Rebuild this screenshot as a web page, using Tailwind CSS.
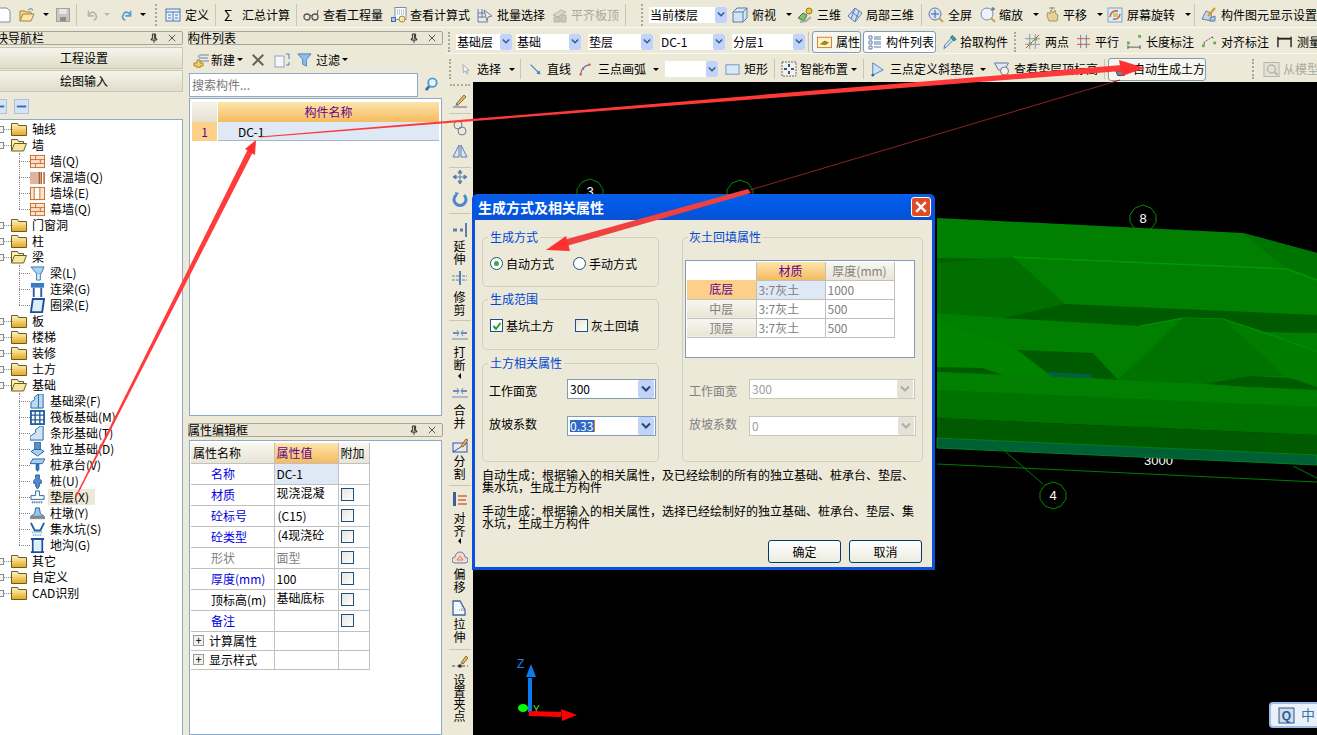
<!DOCTYPE html>
<html lang="zh">
<head>
<meta charset="utf-8">
<title>生成方式及相关属性</title>
<script src="https://cdn.jsdelivr.net/npm/@tailwindcss/browser@4"></script>
</head>
<body class="relative w-[1317px] h-[735px] overflow-hidden bg-[#ece9d8] text-black text-[12px] leading-[16px] whitespace-nowrap font-['Noto_Sans_CJK_SC','Liberation_Sans',sans-serif]">
<svg class="absolute w-0 h-0">
<defs>
<symbol id="page" viewBox="0 0 16 16"><path d="M2 1h9l3 3v11H2z" fill="#fff" stroke="#7f8ea8"/></symbol>
<symbol id="open" viewBox="0 0 16 16"><path d="M1 14V4h5l1 1h5v2" fill="#f6d98a" stroke="#a5803a"/><path d="M1 14l3-7h11l-3 7z" fill="#fbe7a8" stroke="#a5803a"/><path d="M9 3q3-3 5 0" fill="none" stroke="#3d7ac0"/></symbol>
<symbol id="save" viewBox="0 0 16 16"><rect x="1.500" y="1.500" width="13" height="13" fill="#c6c6c0" stroke="#a2a29b"/><rect x="4" y="2" width="8" height="5" fill="#e6e6e0"/><rect x="5" y="10" width="6" height="4" fill="#8f8f8a"/></symbol>
<symbol id="undo" viewBox="0 0 16 16"><path d="M4 3v6h6M4 8q5-6 8-1t-2 7" fill="none" stroke="currentColor" stroke-width="2"/></symbol>
<symbol id="redo" viewBox="0 0 16 16"><path d="M12 3v6H6M12 8Q7 2 4 7t2 7" fill="none" stroke="currentColor" stroke-width="2"/></symbol>
<symbol id="def" viewBox="0 0 16 16"><rect x="1" y="2" width="14" height="12" fill="#eaf1fb" stroke="#4a76ae"/><path d="M1 5h14M8 5v9M3 8h3M3 11h3M10 8h3M10 11h3" stroke="#4a76ae"/></symbol>
<symbol id="glass" viewBox="0 0 16 16"><circle cx="4" cy="10" r="3" fill="none" stroke="#555" stroke-width="1.300"/><circle cx="12" cy="10" r="3" fill="none" stroke="#555" stroke-width="1.300"/><path d="M7 9q1-1 2 0M14 8l1-5" fill="none" stroke="#555"/></symbol>
<symbol id="calc" viewBox="0 0 16 16"><rect x="4" y="0.500" width="11" height="12" fill="#fff" stroke="#7f8ea8"/><path d="M6 3h7M6 5h7M6 7h7" stroke="#7a92bd" stroke-dasharray="1 1"/><rect x="0.500" y="10.500" width="4" height="4" fill="#a8c3ec" stroke="#476ea8"/><circle cx="11" cy="12" r="3" fill="#fbe6a3" stroke="#9a8b55"/></symbol>
<symbol id="batch" viewBox="0 0 16 16"><path d="M1 2v13h10M1 6h9M1 10h7M5 2v9" fill="none" stroke="#5f7fb3"/><path d="M7 3l8 6-4 1-1 4z" fill="#e8eef8" stroke="#6d7f9b"/></symbol>
<symbol id="flat" viewBox="0 0 16 16"><path d="M1 8l8-5 5 2-8 5z" fill="#d9d8cf" stroke="#b6b5ab"/><path d="M2 10h6v5H2zM9 8h5v7H9z" fill="#c7c6bb" stroke="#b6b5ab"/></symbol>
<symbol id="cube" viewBox="0 0 16 16"><path d="M1 5l4-4h10v10l-4 4H1z" fill="#d3e4f5" stroke="#5a7ca5"/><path d="M1 5h10v10M11 5l4-4" fill="none" stroke="#5a7ca5"/></symbol>
<symbol id="three" viewBox="0 0 16 16"><path d="M1 11l5-5 4 2-3 6z" fill="#7fc06a" stroke="#497a3a"/><circle cx="12" cy="4" r="3" fill="#f2c53d" stroke="#a07a1a"/><path d="M3 15l6-1 5-4" fill="none" stroke="#aaa" stroke-width="2"/></symbol>
<symbol id="local" viewBox="0 0 16 16"><path d="M1 9l7-8 7 5-7 9z" fill="#cfe0f6" stroke="#5b7fb0"/><path d="M4.500 5l7 5M8 1.500L4 12M12 4l-4 10" stroke="#5b7fb0"/></symbol>
<symbol id="full" viewBox="0 0 16 16"><circle cx="7" cy="7" r="6" fill="#d7e3f5" stroke="#64799d"/><path d="M7 3v8M3 7h8" stroke="#3e5f96"/><path d="M11 11l4 4" stroke="#c9a24f" stroke-width="2"/></symbol>
<symbol id="zoom" viewBox="0 0 16 16"><circle cx="7" cy="7" r="6" fill="#eef3fb" stroke="#7f8ea8"/><path d="M11 11l4 4" stroke="#c9a24f" stroke-width="2"/><path d="M11 2h4M13 0v4" stroke="#3e5f96"/></symbol>
<symbol id="hand" viewBox="0 0 16 16"><path d="M3 9l1-4 2 2 1-4 2 3 2-3 1 4 2 1-1 6H5z" fill="#e8cf9b" stroke="#a89466"/><path d="M8 0v3M5 1h6" stroke="#8c8c80"/></symbol>
<symbol id="rot" viewBox="0 0 16 16"><rect x="1" y="1" width="14" height="14" fill="#d9ecf8" stroke="#77a8cc"/><path d="M3 10q1-7 8-6M13 7q-1 6-7 5" fill="none" stroke="#e05a3c" stroke-width="1.500"/><rect x="6" y="6" width="5" height="4" fill="#b7d67a"/></symbol>
<symbol id="gear" viewBox="0 0 16 16"><path d="M1 12l4-8 5 2 1 8z" fill="#c9d7ea" stroke="#6b7f9c"/><path d="M7 9l7-8" stroke="#d79a2b" stroke-width="2"/><path d="M9 11l5-2v5H9z" fill="#a9c6ea" stroke="#5f7ca5"/></symbol>
<symbol id="attr" viewBox="0 0 16 16"><rect x="0.500" y="3.500" width="15" height="11" fill="#fff3cf" stroke="#d47d2a"/><path d="M3 11l5-4 5 2-4 3z" fill="#9c8a1f"/></symbol>
<symbol id="list" viewBox="0 0 16 16"><path d="M2 2h3v3H2zM2 7h3v3H2zM2 12h3v3H2z" fill="#fff" stroke="#5a7ca5"/><path d="M7 3h7M7 5h7M7 8h7M7 10h7M7 13h7" stroke="#5a7ca5"/></symbol>
<symbol id="pick" viewBox="0 0 16 16"><path d="M2 15l1-4 7-7 2 2-7 7z" fill="#cfe5f5" stroke="#4a7ba6"/><path d="M9 3l2-2 4 4-2 2z" fill="#39a0b0" stroke="#2a6f80"/></symbol>
<symbol id="two" viewBox="0 0 16 16"><path d="M0 5h16M0 11h16M5 0v16M11 0v16" stroke="#8a94b4"/><path d="M1 15L15 1" stroke="#dd3b2c"/><rect x="4" y="9" width="3" height="3" fill="#66b04c"/><rect x="10" y="4" width="3" height="3" fill="#66b04c"/></symbol>
<symbol id="para" viewBox="0 0 16 16"><path d="M1 5h14M1 11h14" stroke="#d8534a"/><path d="M5 1v14M11 1v14" stroke="#6077ae"/></symbol>
<symbol id="leng" viewBox="0 0 16 16"><rect x="0" y="8" width="3" height="3" fill="#66b04c"/><rect x="12" y="1" width="3" height="3" fill="#66b04c"/><path d="M1 14h13M1 12v4M14 12v4" stroke="#555"/></symbol>
<symbol id="alig" viewBox="0 0 16 16"><rect x="0" y="11" width="3" height="3" fill="#66b04c"/><rect x="12" y="8" width="3" height="3" fill="#66b04c"/><path d="M2 9l9-6M2 9l1 2M11 3l1 2" stroke="#555" stroke-dasharray="2 1"/></symbol>
<symbol id="meas" viewBox="0 0 16 16"><path d="M1 3v11M15 3v11" stroke="#222" stroke-width="1.500"/><path d="M1 5h14" stroke="#222" stroke-width="2"/></symbol>
<symbol id="cursor" viewBox="0 0 16 16"><path d="M3 1l10 9-4 .5 2 4.500-2 .5-2-4.500-3 3z" fill="#eef2fa" stroke="#7d8aa6"/></symbol>
<symbol id="line" viewBox="0 0 16 16"><path d="M2 2l11 11" stroke="#4d7fbf" stroke-width="1.500"/><path d="M14 14l-5-1 4-4z" fill="#4d7fbf"/></symbol>
<symbol id="arc" viewBox="0 0 16 16"><path d="M2 14Q3 4 13 2" fill="none" stroke="#4d7fbf" stroke-width="1.500"/><circle cx="2" cy="14" r="1.500" fill="#dd5a44"/><circle cx="13" cy="2" r="1.500" fill="#dd5a44"/><circle cx="5" cy="7" r="1.500" fill="#dd5a44"/></symbol>
<symbol id="rect" viewBox="0 0 16 16"><rect x="1" y="3" width="14" height="10" fill="#dce8fa" stroke="#6c8fc4"/></symbol>
<symbol id="smart" viewBox="0 0 16 16"><rect x="1" y="1" width="14" height="14" fill="#f3f2ea" stroke="#666" stroke-dasharray="2 1"/><path d="M8 3v3M8 10v3M3 8h3M10 8h3" stroke="#39577f" stroke-width="2"/></symbol>
<symbol id="tri" viewBox="0 0 16 16"><path d="M2 1v14l12-6z" fill="#cfe1f8" stroke="#3f78c0"/><circle cx="2" cy="15" r="1.500" fill="#2d62a8"/></symbol>
<symbol id="vtop" viewBox="0 0 16 16"><path d="M1 2h14l-4 7H5z" fill="#dfe9f6" stroke="#5a7ca5"/><circle cx="11" cy="10" r="4" fill="#f3f3ee" stroke="#777"/><path d="M13 13l3 3" stroke="#c9a24f" stroke-width="2"/></symbol>
<symbol id="auto" viewBox="0 0 16 16"><path d="M2 10h11l-2 5H4z" fill="#7b7f92" stroke="#444"/><path d="M2 6l3 3 8-8" fill="none" stroke="#37a02f" stroke-width="2.500"/></symbol>
<symbol id="model" viewBox="0 0 16 16"><rect x="0.500" y="1.500" width="15" height="14" fill="#e4e2d6" stroke="#b7b5a8"/><circle cx="8" cy="8" r="4" fill="none" stroke="#b7b5a8" stroke-width="1.500"/><path d="M11 11l3 3" stroke="#b7b5a8" stroke-width="2"/></symbol>
<symbol id="fold" viewBox="0 0 16 16"><path d="M0.500 2.500h6l1 2h8v10H.5z" fill="url(#fg)" stroke="#6e5a1f"/></symbol>
<symbol id="foldo" viewBox="0 0 16 16"><path d="M.5 14V2.500h6l1 2h5v2" fill="#f8eeb8" stroke="#6e5a1f"/><path d="M.5 14l3-7.500h12l-3 7.500z" fill="#f9e79d" stroke="#6e5a1f"/></symbol>
<linearGradient id="fg" x1="0" y1="0" x2="0" y2="1"><stop offset="0" stop-color="#fff6c8"/><stop offset="1" stop-color="#e2a818"/></linearGradient>
<symbol id="brick" viewBox="0 0 16 16"><rect x="0.500" y="1.500" width="15" height="13" fill="#fbe3cf" stroke="#c86a2a"/><path d="M1 6h14M1 10h14M6 2v4M11 6v4M6 10v4" stroke="#c86a2a"/></symbol>
<symbol id="brick2" viewBox="0 0 16 16"><rect x="0" y="2" width="10" height="13" fill="#dcb6a0"/><path d="M10 2v13M12 2v13M15 2v13" stroke="#b0562a" stroke-width="1.500"/></symbol>
<symbol id="pier" viewBox="0 0 16 16"><rect x="0.500" y="1.500" width="15" height="13" fill="#fbe3cf" stroke="#c86a2a"/><rect x="4.500" y="1.500" width="6" height="13" fill="#fff" stroke="#c86a2a"/></symbol>
<symbol id="beam" viewBox="0 0 16 16"><path d="M1 1h14l-3 7H7z" fill="#a9d3f2" stroke="#3275b8"/><path d="M7 8v7h4V8" fill="#dbeefa" stroke="#3275b8"/></symbol>
<symbol id="cbeam" viewBox="0 0 16 16"><rect x="1" y="1" width="14" height="5" fill="#3a7cc4"/><path d="M4 6v10M12 6v10" stroke="#2c5ea0" stroke-width="2"/></symbol>
<symbol id="ring" viewBox="0 0 16 16"><path d="M3 1h12l-2 14H1z" fill="#dbeefa" stroke="#1d4f99" stroke-width="2"/></symbol>
<symbol id="fbeam" viewBox="0 0 16 16"><path d="M1 15V9l4-3V3l4-3h5v15z" fill="#b9daf4" stroke="#25609f"/><path d="M9 0v15" stroke="#25609f"/></symbol>
<symbol id="raft" viewBox="0 0 16 16"><rect x="1" y="1" width="14" height="14" fill="#fff" stroke="#25609f" stroke-width="2"/><path d="M5.500 1v14M10.500 1v14M1 5.500h14M1 10.500h14" stroke="#25609f" stroke-width="1.500"/></symbol>
<symbol id="strip" viewBox="0 0 16 16"><path d="M0 15v-4l6-4V4l5-4h3v15z" fill="#cde4f7" stroke="#25609f"/></symbol>
<symbol id="ind" viewBox="0 0 16 16"><path d="M1 10l7-4 7 4-7 5z" fill="#a9cfef" stroke="#25609f"/><rect x="5" y="0" width="6" height="8" fill="#5c93cc" stroke="#25609f"/></symbol>
<symbol id="cap" viewBox="0 0 16 16"><path d="M3 1h13l-3 5H0z" fill="#a9cfef" stroke="#25609f"/><path d="M6 6h4v6l-2 3-2-3z" fill="#2f6fb5"/></symbol>
<symbol id="pile" viewBox="0 0 16 16"><path d="M6 1h4v4l2 2v3h-2v3l-2 3-2-3v-3H4V7l2-2z" fill="#4f8ccb" stroke="#25609f"/></symbol>
<symbol id="pad" viewBox="0 0 16 16"><path d="M6 1h4v5h5v4H1V6h5z" fill="#fff" stroke="#25609f"/><path d="M2 13h12" stroke="#25609f" stroke-dasharray="1 1" stroke-width="2"/></symbol>
<symbol id="cush" viewBox="0 0 16 16"><path d="M1 11l4-3 1-6h4l1 6 4 3z" fill="#9ec6ea" stroke="#25609f"/><rect x="0" y="11" width="16" height="3" fill="#8d8d85"/></symbol>
<symbol id="sump" viewBox="0 0 16 16"><path d="M1 1l4 8h6l4-8" fill="none" stroke="#25609f" stroke-width="2"/><path d="M2 11h12M3 14h10" stroke="#6ba3d6" stroke-dasharray="1 1" stroke-width="2"/></symbol>
<symbol id="trench" viewBox="0 0 16 16"><path d="M1 15h14M1 1h14M3 2v12M13 2v12" stroke="#1d4f99" stroke-width="2"/><rect x="4" y="3" width="8" height="10" fill="#dbeefa"/></symbol>
<symbol id="brush" viewBox="0 0 16 16"><path d="M1 14h14" stroke="#667"/><path d="M4 11l8-9 2 2-8 8z" fill="#e8b75e" stroke="#8a6a33"/><path d="M3 13l2-3 2 2z" fill="#6c6fc0"/></symbol>
<symbol id="circ" viewBox="0 0 16 16"><circle cx="6" cy="5" r="4" fill="none" stroke="#6d7c9a"/><circle cx="10" cy="11" r="4" fill="none" stroke="#6d7c9a"/></symbol>
<symbol id="mirror" viewBox="0 0 16 16"><path d="M7 2v12H1zM9 2v12h6z" fill="#dce8f6" stroke="#5c7eaf"/></symbol>
<symbol id="move" viewBox="0 0 16 16"><path d="M8 1v14M1 8h14M8 1L6 4h4zM8 15l-2-3h4zM1 8l3-2v4zM15 8l-3-2v4z" fill="#5d7fae" stroke="#5d7fae"/></symbol>
<symbol id="rotb" viewBox="0 0 16 16"><path d="M12 4a6 6 0 1 1-8 0" fill="none" stroke="#4d87cf" stroke-width="3"/><path d="M3 1l4 1-3 4z" fill="#4d87cf"/></symbol>
<symbol id="ext" viewBox="0 0 16 16"><rect x="13" y="1" width="2" height="14" fill="#5d7fae"/><path d="M1 8h5M8 8h3" stroke="#5d7fae" stroke-width="3" stroke-dasharray="4 1"/></symbol>
<symbol id="trim" viewBox="0 0 16 16"><rect x="7" y="1" width="2" height="14" fill="#5d7fae"/><path d="M0 6h7M0 10h7M10 6h5M10 10h5" stroke="#5d7fae" stroke-dasharray="3 1"/></symbol>
<symbol id="brk" viewBox="0 0 16 16"><path d="M1 6h6M9 6h6" stroke="#6d8cb9" stroke-width="2"/><path d="M0 12h16" stroke="#6d8cb9"/><path d="M5 3l2 3-2 3M11 3L9 6l2 3" fill="none" stroke="#6d8cb9"/></symbol>
<symbol id="seg" viewBox="0 0 16 16"><rect x="1" y="6" width="14" height="9" fill="none" stroke="#2d50c8"/><path d="M1 15L15 6" stroke="#2d50c8"/><path d="M9 9l5-7 2 1-5 7z" fill="#e8b75e" stroke="#8a6a33"/></symbol>
<symbol id="alg" viewBox="0 0 16 16"><rect x="1" y="1" width="3" height="14" fill="#3d5f94"/><path d="M6 5h9M6 9h8M6 13h9" stroke="#cc6a44" stroke-width="1.500"/></symbol>
<symbol id="off" viewBox="0 0 16 16"><path d="M3 13a3 3 0 0 1 0-6q1-5 5-5t5 5a3 3 0 0 1 0 6z" fill="#f7d9d2" stroke="#5b7fb0"/><path d="M5 10l3-4 3 4z" fill="none" stroke="#d9785f"/></symbol>
<symbol id="str" viewBox="0 0 16 16"><path d="M1 15V1h7l5 9v5z" fill="#f4f7fc" stroke="#3f66a3" stroke-width="1.300"/><path d="M10 6v6M7 10h6" stroke="#888" stroke-dasharray="1 1"/></symbol>
<symbol id="setp" viewBox="0 0 16 16"><path d="M0 11h16" stroke="#444" stroke-dasharray="3 2"/><rect x="6.500" y="9.500" width="3" height="3" fill="#222"/><path d="M9 8l5-7 2 2-5 6z" fill="#e8b75e" stroke="#8a6a33"/></symbol>
<symbol id="chev" viewBox="0 0 10 8"><path d="M1 1.500l4 4 4-4" fill="none" stroke="currentColor" stroke-width="2"/></symbol>
<symbol id="pin" viewBox="0 0 10 12"><path d="M3 1h4v6h1.500v1.500h-7V7H3zM5 8.500V12M5.500 1.500V7" fill="none" stroke="#000"/></symbol>
<symbol id="xx" viewBox="0 0 10 10"><path d="M1 1l8 8M9 1l-8 8" stroke="#333"/></symbol>
<symbol id="mag" viewBox="0 0 16 16"><circle cx="9" cy="6" r="4.500" fill="#eaf4ff" stroke="#4b9bdc" stroke-width="2"/><path d="M5.500 10L2 14" stroke="#4b6fa0" stroke-width="3"/></symbol>
<symbol id="newi" viewBox="0 0 16 16"><path d="M7 3h9M7 6h8M7 9h9" stroke="#6f85ab"/><path d="M1 11h3V8h3v3h3v3H7v2H4v-2H1z" fill="#f2cf6c" stroke="#a88526"/><path d="M4 4L7 2v6z" fill="#a6bcdc"/></symbol>
<symbol id="del" viewBox="0 0 16 16"><path d="M2 2l12 12M14 2L2 14" stroke="#66665f" stroke-width="2.400"/></symbol>
<symbol id="copy" viewBox="0 0 16 16"><rect x="1" y="4" width="9" height="11" fill="#f4f6fb" stroke="#93a3bd"/><path d="M12 2h3v5M15 10v3h-3" fill="none" stroke="#4a7ec0"/></symbol>
<symbol id="filt" viewBox="0 0 16 16"><path d="M1 2h14L10 8v7l-4-2V8z" fill="#8cc0ea" stroke="#4a7ec0"/></symbol>
<symbol id="min" viewBox="0 0 16 16"><rect x="0.500" y="0.500" width="15" height="15" fill="#d6e3f5" stroke="#a9bedc"/><path d="M3 8h10" stroke="#2f6ab3" stroke-width="2"/></symbol>
</defs>
</svg>

<!-- top toolbar -->
<div class="flex items-center h-[28px] pt-[2px] border-b border-[#f8f7f0] overflow-hidden">
  <svg class="ml-[-4px] w-[16px] h-[16px] mr-[6px] shrink-0"><use href="#page"/></svg>
  <svg class="w-[18px] h-[16px] mr-[7px] shrink-0"><use href="#open"/></svg>
  <i class="w-[12px] shrink-0"><b class="block w-0 h-0 border-x-[3px] border-t-[3px] border-x-transparent border-t-black"></b></i>
  <svg class="w-[16px] h-[16px] mr-[5px] shrink-0"><use href="#save"/></svg>
  <i class="w-[9px] h-[22px] border-l border-[#c9c6b6] shrink-0"></i>
  <svg class="w-[14px] h-[16px] mr-[5px] text-[#b8b8b2] shrink-0"><use href="#undo"/></svg>
  <i class="w-[16px] shrink-0"><b class="block w-0 h-0 border-x-[3px] border-t-[3px] border-x-transparent border-t-[#b8b8b2]"></b></i>
  <svg class="w-[14px] h-[16px] mr-[6px] text-[#5f9ad8] shrink-0"><use href="#redo"/></svg>
  <i class="w-[15px] shrink-0"><b class="block w-0 h-0 border-x-[3px] border-t-[3px] border-x-transparent border-t-black"></b></i>
  <i class="w-[10px] h-[22px] border-l-2 border-dotted border-[#aaa89a] shrink-0"></i>
  <div class="w-[50px] shrink-0 flex items-center gap-[4px]"><svg class="w-[16px] h-[16px]"><use href="#def"/></svg><span>定义</span></div>
  <i class="w-[9px] h-[22px] border-l border-[#c9c6b6] shrink-0"></i>
  <div class="w-[72px] shrink-0 flex items-center"><span class="w-[18px] text-[14px]">Σ</span><span>汇总计算</span></div>
  <i class="w-[7px] h-[22px] border-l border-[#c9c6b6] shrink-0"></i>
  <div class="w-[88px] shrink-0 flex items-center gap-[4px]"><svg class="w-[16px] h-[16px]"><use href="#glass"/></svg><span>查看工程量</span></div>
  <div class="w-[86px] shrink-0 flex items-center gap-[3px]"><svg class="w-[16px] h-[16px]"><use href="#calc"/></svg><span>查看计算式</span></div>
  <div class="w-[75px] shrink-0 flex items-center gap-[4px]"><svg class="w-[16px] h-[16px]"><use href="#batch"/></svg><span>批量选择</span></div>
  <div class="w-[73px] shrink-0 flex items-center gap-[3px] text-[#a9a89e]"><svg class="w-[16px] h-[16px]"><use href="#flat"/></svg><span>平齐板顶</span></div>
  <i class="w-[16px] h-[22px] border-l border-[#c9c6b6] shrink-0"></i>
  <i class="w-[8px] h-[22px] border-l-2 border-dotted border-[#aaa89a] shrink-0"></i>
  <div class="w-[78px] h-[16px] shrink-0 bg-white flex items-center justify-between pl-[1px]"><span>当前楼层</span><span class="w-[12px] h-[16px] bg-[#c1d2fb] rounded-[2px] flex items-center justify-center text-[#3a5a90]"><svg class="w-[8px] h-[7px]"><use href="#chev"/></svg></span></div>
  <div class="ml-[5px] w-[65px] shrink-0 flex items-center gap-[4px]"><svg class="w-[16px] h-[16px]"><use href="#cube"/></svg><span>俯视</span><b class="ml-[6px] block w-0 h-0 border-x-[3px] border-t-[3px] border-x-transparent border-t-black"></b></div>
  <div class="w-[50px] shrink-0 flex items-center gap-[4px]"><svg class="w-[16px] h-[16px]"><use href="#three"/></svg><span>三维</span></div>
  <div class="w-[74px] shrink-0 flex items-center gap-[3px]"><svg class="w-[16px] h-[16px]"><use href="#local"/></svg><span>局部三维</span></div>
  <i class="w-[7px] h-[22px] border-l border-[#c9c6b6] shrink-0"></i>
  <div class="w-[52px] shrink-0 flex items-center gap-[4px]"><svg class="w-[16px] h-[16px]"><use href="#full"/></svg><span>全屏</span></div>
  <div class="w-[64px] shrink-0 flex items-center gap-[3px]"><svg class="w-[16px] h-[16px]"><use href="#zoom"/></svg><span>缩放</span><b class="ml-[7px] block w-0 h-0 border-x-[3px] border-t-[3px] border-x-transparent border-t-black"></b></div>
  <div class="w-[63px] shrink-0 flex items-center gap-[3px]"><svg class="w-[16px] h-[16px]"><use href="#hand"/></svg><span>平移</span><b class="ml-[7px] block w-0 h-0 border-x-[3px] border-t-[3px] border-x-transparent border-t-black"></b></div>
  <div class="w-[87px] shrink-0 flex items-center gap-[4px]"><svg class="w-[16px] h-[16px]"><use href="#rot"/></svg><span>屏幕旋转</span><b class="ml-[6px] block w-0 h-0 border-x-[3px] border-t-[3px] border-x-transparent border-t-black"></b></div>
  <i class="w-[7px] h-[22px] border-l border-[#c9c6b6] shrink-0"></i>
  <div class="shrink-0 flex items-center gap-[4px]"><svg class="w-[16px] h-[16px]"><use href="#gear"/></svg><span>构件图元显示设置</span></div>
</div>

<div class="flex h-[707px]">
  <!-- left navigation -->
  <div class="ml-[-15px] w-[198px] shrink-0 pt-[3px] flex flex-col">
    <div class="h-[14px] flex items-center justify-between bg-[#e9e6d6] border border-[#a8a597] rounded-[2px] pl-[10px] pr-[6px]"><span>快导航栏</span><span class="flex items-center gap-[10px]"><svg class="w-[8px] h-[10px]"><use href="#pin"/></svg><svg class="w-[8px] h-[8px]"><use href="#xx"/></svg></span></div>
    <div class="mt-[2px] h-[22px] flex items-center justify-center bg-gradient-to-b from-[#f6f4ea] to-[#e0ddcb] border border-[#c9c6b6]">工程设置</div>
    <div class="mt-px h-[22px] flex items-center justify-center bg-gradient-to-b from-[#f6f4ea] to-[#e0ddcb] border border-[#c9c6b6]">绘图输入</div>
    <div class="mt-[2px] h-[25px] flex items-center pl-[7px] gap-[7px]"><svg class="w-[15px] h-[15px]"><use href="#min"/></svg><svg class="w-[15px] h-[15px]"><use href="#min"/></svg></div>
    <div class="flex-1 bg-white border-r border-t border-[#8faac8] pt-px pl-[12px] overflow-hidden">
      <div class="h-4 flex items-center"><i class="w-[7px] h-[7px] border border-[#8a8a8a] shrink-0 bg-[#f4f4f0]"></i><i class="w-[7px] border-t border-dotted border-[#888]"></i><svg class="w-[16px] h-[16px] shrink-0"><use href="#fold"/></svg><span class="ml-[5px]">轴线</span></div>
      <div class="h-4 flex items-center"><i class="w-[7px] h-[7px] border border-[#8a8a8a] shrink-0 bg-[#f4f4f0]"></i><i class="w-[7px] border-t border-dotted border-[#888]"></i><svg class="w-[16px] h-[16px] shrink-0"><use href="#foldo"/></svg><span class="ml-[5px]">墙</span></div>
      <div class="relative">
        <i class="absolute left-[22px] top-0 bottom-[8px] border-l border-dotted border-[#888]"></i>
        <div class="h-4 flex items-center pl-[22px]"><i class="w-[11px] border-t border-dotted border-[#888]"></i><svg class="w-[15px] h-[15px] shrink-0"><use href="#brick"/></svg><span class="ml-[5px]">墙(Q)</span></div>
        <div class="h-4 flex items-center pl-[22px]"><i class="w-[11px] border-t border-dotted border-[#888]"></i><svg class="w-[15px] h-[15px] shrink-0"><use href="#brick2"/></svg><span class="ml-[5px]">保温墙(Q)</span></div>
        <div class="h-4 flex items-center pl-[22px]"><i class="w-[11px] border-t border-dotted border-[#888]"></i><svg class="w-[15px] h-[15px] shrink-0"><use href="#pier"/></svg><span class="ml-[5px]">墙垛(E)</span></div>
        <div class="h-4 flex items-center pl-[22px]"><i class="w-[11px] border-t border-dotted border-[#888]"></i><svg class="w-[15px] h-[15px] shrink-0"><use href="#brick"/></svg><span class="ml-[5px]">幕墙(Q)</span></div>
      </div>
      <div class="h-4 flex items-center"><i class="w-[7px] h-[7px] border border-[#8a8a8a] shrink-0 bg-[#f4f4f0]"></i><i class="w-[7px] border-t border-dotted border-[#888]"></i><svg class="w-[16px] h-[16px] shrink-0"><use href="#fold"/></svg><span class="ml-[5px]">门窗洞</span></div>
      <div class="h-4 flex items-center"><i class="w-[7px] h-[7px] border border-[#8a8a8a] shrink-0 bg-[#f4f4f0]"></i><i class="w-[7px] border-t border-dotted border-[#888]"></i><svg class="w-[16px] h-[16px] shrink-0"><use href="#fold"/></svg><span class="ml-[5px]">柱</span></div>
      <div class="h-4 flex items-center"><i class="w-[7px] h-[7px] border border-[#8a8a8a] shrink-0 bg-[#f4f4f0]"></i><i class="w-[7px] border-t border-dotted border-[#888]"></i><svg class="w-[16px] h-[16px] shrink-0"><use href="#foldo"/></svg><span class="ml-[5px]">梁</span></div>
      <div class="relative">
        <i class="absolute left-[22px] top-0 bottom-[8px] border-l border-dotted border-[#888]"></i>
        <div class="h-4 flex items-center pl-[22px]"><i class="w-[11px] border-t border-dotted border-[#888]"></i><svg class="w-[15px] h-[15px] shrink-0"><use href="#beam"/></svg><span class="ml-[5px]">梁(L)</span></div>
        <div class="h-4 flex items-center pl-[22px]"><i class="w-[11px] border-t border-dotted border-[#888]"></i><svg class="w-[15px] h-[15px] shrink-0"><use href="#cbeam"/></svg><span class="ml-[5px]">连梁(G)</span></div>
        <div class="h-4 flex items-center pl-[22px]"><i class="w-[11px] border-t border-dotted border-[#888]"></i><svg class="w-[15px] h-[15px] shrink-0"><use href="#ring"/></svg><span class="ml-[5px]">圈梁(E)</span></div>
      </div>
      <div class="h-4 flex items-center"><i class="w-[7px] h-[7px] border border-[#8a8a8a] shrink-0 bg-[#f4f4f0]"></i><i class="w-[7px] border-t border-dotted border-[#888]"></i><svg class="w-[16px] h-[16px] shrink-0"><use href="#fold"/></svg><span class="ml-[5px]">板</span></div>
      <div class="h-4 flex items-center"><i class="w-[7px] h-[7px] border border-[#8a8a8a] shrink-0 bg-[#f4f4f0]"></i><i class="w-[7px] border-t border-dotted border-[#888]"></i><svg class="w-[16px] h-[16px] shrink-0"><use href="#fold"/></svg><span class="ml-[5px]">楼梯</span></div>
      <div class="h-4 flex items-center"><i class="w-[7px] h-[7px] border border-[#8a8a8a] shrink-0 bg-[#f4f4f0]"></i><i class="w-[7px] border-t border-dotted border-[#888]"></i><svg class="w-[16px] h-[16px] shrink-0"><use href="#fold"/></svg><span class="ml-[5px]">装修</span></div>
      <div class="h-4 flex items-center"><i class="w-[7px] h-[7px] border border-[#8a8a8a] shrink-0 bg-[#f4f4f0]"></i><i class="w-[7px] border-t border-dotted border-[#888]"></i><svg class="w-[16px] h-[16px] shrink-0"><use href="#fold"/></svg><span class="ml-[5px]">土方</span></div>
      <div class="h-4 flex items-center"><i class="w-[7px] h-[7px] border border-[#8a8a8a] shrink-0 bg-[#f4f4f0]"></i><i class="w-[7px] border-t border-dotted border-[#888]"></i><svg class="w-[16px] h-[16px] shrink-0"><use href="#foldo"/></svg><span class="ml-[5px]">基础</span></div>
      <div class="relative">
        <i class="absolute left-[22px] top-0 bottom-[8px] border-l border-dotted border-[#888]"></i>
        <div class="h-4 flex items-center pl-[22px]"><i class="w-[11px] border-t border-dotted border-[#888]"></i><svg class="w-[15px] h-[15px] shrink-0"><use href="#fbeam"/></svg><span class="ml-[5px]">基础梁(F)</span></div>
        <div class="h-4 flex items-center pl-[22px]"><i class="w-[11px] border-t border-dotted border-[#888]"></i><svg class="w-[15px] h-[15px] shrink-0"><use href="#raft"/></svg><span class="ml-[5px]">筏板基础(M)</span></div>
        <div class="h-4 flex items-center pl-[22px]"><i class="w-[11px] border-t border-dotted border-[#888]"></i><svg class="w-[15px] h-[15px] shrink-0"><use href="#strip"/></svg><span class="ml-[5px]">条形基础(T)</span></div>
        <div class="h-4 flex items-center pl-[22px]"><i class="w-[11px] border-t border-dotted border-[#888]"></i><svg class="w-[15px] h-[15px] shrink-0"><use href="#ind"/></svg><span class="ml-[5px]">独立基础(D)</span></div>
        <div class="h-4 flex items-center pl-[22px]"><i class="w-[11px] border-t border-dotted border-[#888]"></i><svg class="w-[15px] h-[15px] shrink-0"><use href="#cap"/></svg><span class="ml-[5px]">桩承台(V)</span></div>
        <div class="h-4 flex items-center pl-[22px]"><i class="w-[11px] border-t border-dotted border-[#888]"></i><svg class="w-[15px] h-[15px] shrink-0"><use href="#pile"/></svg><span class="ml-[5px]">桩(U)</span></div>
        <div class="h-4 flex items-center pl-[22px]"><i class="w-[11px] border-t border-dotted border-[#888]"></i><svg class="w-[15px] h-[15px] shrink-0"><use href="#pad"/></svg><span class="ml-[3px] pl-[2px] pr-[6px] bg-[#ece9d8]">垫层(X)</span></div>
        <div class="h-4 flex items-center pl-[22px]"><i class="w-[11px] border-t border-dotted border-[#888]"></i><svg class="w-[15px] h-[15px] shrink-0"><use href="#cush"/></svg><span class="ml-[5px]">柱墩(Y)</span></div>
        <div class="h-4 flex items-center pl-[22px]"><i class="w-[11px] border-t border-dotted border-[#888]"></i><svg class="w-[15px] h-[15px] shrink-0"><use href="#sump"/></svg><span class="ml-[5px]">集水坑(S)</span></div>
        <div class="h-4 flex items-center pl-[22px]"><i class="w-[11px] border-t border-dotted border-[#888]"></i><svg class="w-[15px] h-[15px] shrink-0"><use href="#trench"/></svg><span class="ml-[5px]">地沟(G)</span></div>
      </div>
      <div class="h-4 flex items-center"><i class="w-[7px] h-[7px] border border-[#8a8a8a] shrink-0 bg-[#f4f4f0]"></i><i class="w-[7px] border-t border-dotted border-[#888]"></i><svg class="w-[16px] h-[16px] shrink-0"><use href="#fold"/></svg><span class="ml-[5px]">其它</span></div>
      <div class="h-4 flex items-center"><i class="w-[7px] h-[7px] border border-[#8a8a8a] shrink-0 bg-[#f4f4f0]"></i><i class="w-[7px] border-t border-dotted border-[#888]"></i><svg class="w-[16px] h-[16px] shrink-0"><use href="#fold"/></svg><span class="ml-[5px]">自定义</span></div>
      <div class="h-4 flex items-center"><i class="w-[7px] h-[7px] border border-[#8a8a8a] shrink-0 bg-[#f4f4f0]"></i><i class="w-[7px] border-t border-dotted border-[#888]"></i><svg class="w-[16px] h-[16px] shrink-0"><use href="#fold"/></svg><span class="ml-[5px]">CAD识别</span></div>
    </div>
  </div>

  <!-- component list + properties -->
  <div class="ml-[5px] w-[255px] shrink-0 pt-[3px] flex flex-col">
    <div class="h-[14px] flex items-center justify-between bg-[#e9e6d6] border border-[#a8a597] rounded-[2px] pr-[6px]"><span class="-ml-px">构件列表</span><span class="flex items-center gap-[10px]"><svg class="w-[8px] h-[10px]"><use href="#pin"/></svg><svg class="w-[8px] h-[8px]"><use href="#xx"/></svg></span></div>
    <div class="mt-[2px] h-[25px] flex items-center pl-[5px]">
      <svg class="w-[16px] h-[16px]"><use href="#newi"/></svg><span class="ml-[2px]">新建</span><b class="ml-[2px] block w-0 h-0 border-x-[3px] border-t-[3px] border-x-transparent border-t-black"></b>
      <svg class="ml-[8px] w-[14px] h-[14px]"><use href="#del"/></svg>
      <svg class="ml-[9px] w-[16px] h-[16px]"><use href="#copy"/></svg>
      <svg class="ml-[7px] w-[15px] h-[15px]"><use href="#filt"/></svg><span class="ml-[4px]">过滤</span><b class="ml-[2px] block w-0 h-0 border-x-[3px] border-t-[3px] border-x-transparent border-t-black"></b>
    </div>
    <div class="h-[25px] flex items-center">
      <div class="ml-px w-[229px] h-[24px] bg-white border border-[#8faac8] pl-[2px] flex items-center text-[#777]">搜索构件...</div>
      <svg class="ml-[6px] w-[15px] h-[15px]"><use href="#mag"/></svg>
    </div>
    <div class="mx-px mt-px h-[318px] bg-white border border-[#8faac8] p-px">
      <div class="flex h-[20px] pt-0 mt-[2px]">
        <div class="ml-px w-[25px] bg-gradient-to-b from-[#f5f3e9] to-[#e4e1d2]"></div>
        <div class="ml-px flex-1 mr-px flex items-center justify-center bg-gradient-to-b from-[#fde4ab] to-[#f5bb5e] text-[#62048c]">构件名称</div>
      </div>
      <div class="flex h-[19px]">
        <div class="ml-px w-[25px] flex items-center justify-center bg-[#fdd08a] text-[#62048c]">1</div>
        <div class="ml-px flex-1 mr-px flex items-center pl-[20px] pt-[2px] bg-[#dfe9f5] border-b border-[#a9b8c8]">DC-1</div>
      </div>
    </div>
    <div class="mt-[7px] h-[14px] flex items-center justify-between bg-[#e9e6d6] border border-[#a8a597] rounded-[2px] pr-[6px]"><span class="-ml-px">属性编辑框</span><span class="flex items-center gap-[10px]"><svg class="w-[8px] h-[10px]"><use href="#pin"/></svg><svg class="w-[8px] h-[8px]"><use href="#xx"/></svg></span></div>
    <div class="mx-px mt-[3px] flex-1 bg-white border border-[#8faac8] pl-px pt-px">
      <table class="table-fixed w-[178px] mt-px">
        <colgroup><col class="w-[83px]"><col class="w-[64px]"><col class="w-[31px]"></colgroup>
        <tr class="h-[20px]"><td class="bg-gradient-to-b from-[#f8f7f0] to-[#e8e5d6] pl-[2px] border-b border-[#c0c0c0]">属性名称</td><td class="bg-gradient-to-b from-[#fde4ab] to-[#f5bb5e] text-[#62048c] pl-[2px] border-l border-b border-[#c0c0c0]">属性值</td><td class="bg-gradient-to-b from-[#f8f7f0] to-[#e8e5d6] pl-[2px] border-l border-r border-b border-[#c0c0c0]">附加</td></tr>
        <tr class="h-[21px]"><td class="pl-[20px] text-[#0000e0] border-b border-[#c0c0c0]">名称</td><td class="pl-[2px] bg-[#dfe9f5] border-l border-b border-[#c0c0c0]">DC-1</td><td class="border-l border-r border-b border-[#c0c0c0]"></td></tr>
        <tr class="h-[21px]"><td class="pl-[20px] text-[#0000e0] border-b border-[#c0c0c0]">材质</td><td class="pl-[2px] pb-[3px] border-l border-b border-[#c0c0c0] overflow-hidden">现浇混凝</td><td class="border-l border-r border-b border-[#c0c0c0]"><i class="block ml-[2px] w-[13px] h-[13px] border border-[#1c5180] bg-gradient-to-br from-[#e6e5dc] to-white"></i></td></tr>
        <tr class="h-[21px]"><td class="pl-[20px] text-[#0000e0] border-b border-[#c0c0c0]">砼标号</td><td class="pl-[3px] border-l border-b border-[#c0c0c0] overflow-hidden">(C15)</td><td class="border-l border-r border-b border-[#c0c0c0]"><i class="block ml-[2px] w-[13px] h-[13px] border border-[#1c5180] bg-gradient-to-br from-[#e6e5dc] to-white"></i></td></tr>
        <tr class="h-[21px]"><td class="pl-[20px] text-[#0000e0] border-b border-[#c0c0c0]">砼类型</td><td class="pl-[3px] pb-[3px] border-l border-b border-[#c0c0c0] overflow-hidden">(4现浇砼</td><td class="border-l border-r border-b border-[#c0c0c0]"><i class="block ml-[2px] w-[13px] h-[13px] border border-[#1c5180] bg-gradient-to-br from-[#e6e5dc] to-white"></i></td></tr>
        <tr class="h-[21px]"><td class="pl-[20px] text-[#808080] border-b border-[#c0c0c0]">形状</td><td class="pl-[2px] text-[#808080] border-l border-b border-[#c0c0c0]">面型</td><td class="border-l border-r border-b border-[#c0c0c0]"><i class="block ml-[2px] w-[13px] h-[13px] border border-[#1c5180] bg-gradient-to-br from-[#e6e5dc] to-white"></i></td></tr>
        <tr class="h-[21px]"><td class="pl-[20px] text-[#0000e0] border-b border-[#c0c0c0]">厚度(mm)</td><td class="pl-[2px] border-l border-b border-[#c0c0c0]">100</td><td class="border-l border-r border-b border-[#c0c0c0]"><i class="block ml-[2px] w-[13px] h-[13px] border border-[#1c5180] bg-gradient-to-br from-[#e6e5dc] to-white"></i></td></tr>
        <tr class="h-[21px]"><td class="pl-[20px] border-b border-[#c0c0c0]">顶标高(m)</td><td class="pl-[2px] pb-[3px] border-l border-b border-[#c0c0c0] overflow-hidden">基础底标</td><td class="border-l border-r border-b border-[#c0c0c0]"><i class="block ml-[2px] w-[13px] h-[13px] border border-[#1c5180] bg-gradient-to-br from-[#e6e5dc] to-white"></i></td></tr>
        <tr class="h-[21px]"><td class="pl-[20px] text-[#0000e0] border-b border-[#c0c0c0]">备注</td><td class="border-l border-b border-[#c0c0c0]"></td><td class="border-l border-r border-b border-[#c0c0c0]"><i class="block ml-[2px] w-[13px] h-[13px] border border-[#1c5180] bg-gradient-to-br from-[#e6e5dc] to-white"></i></td></tr>
        <tr class="h-[19px]"><td class="border-b border-[#c0c0c0]"><span class="flex items-center"><i class="ml-[2px] w-[11px] h-[11px] border border-[#999] bg-[#f2f1ea] flex items-center justify-center not-italic leading-none text-[11px]">+</i><span class="ml-[5px]">计算属性</span></span></td><td class="border-l border-b border-[#c0c0c0]"></td><td class="border-l border-r border-b border-[#c0c0c0]"></td></tr>
        <tr class="h-[19px]"><td class="border-b border-[#c0c0c0]"><span class="flex items-center"><i class="ml-[2px] w-[11px] h-[11px] border border-[#999] bg-[#f2f1ea] flex items-center justify-center not-italic leading-none text-[11px]">+</i><span class="ml-[5px]">显示样式</span></span></td><td class="border-l border-b border-[#c0c0c0]"></td><td class="border-l border-r border-b border-[#c0c0c0]"></td></tr>
      </table>
    </div>
  </div>

  <!-- right area -->
  <div class="ml-[3px] flex-1 min-w-0 flex flex-col">
    <!-- row 2 -->
    <div class="h-[26px] pt-[2px] flex items-center border-b border-[#f8f7f0] overflow-hidden">
      <i class="ml-[2px] w-[8px] h-[20px] border-l-2 border-dotted border-[#aaa89a] shrink-0"></i>
      <div class="w-[56px] h-[16px] shrink-0 bg-white flex items-center justify-between pl-[1px]"><span>基础层</span><span class="w-[12px] h-[16px] bg-[#c1d2fb] rounded-[2px] flex items-center justify-center text-[#3a5a90]"><svg class="w-[8px] h-[7px]"><use href="#chev"/></svg></span></div>
      <div class="ml-[4px] w-[65px] h-[16px] shrink-0 bg-white flex items-center justify-between pl-[1px]"><span>基础</span><span class="w-[12px] h-[16px] bg-[#c1d2fb] rounded-[2px] flex items-center justify-center text-[#3a5a90]"><svg class="w-[8px] h-[7px]"><use href="#chev"/></svg></span></div>
      <div class="ml-[7px] w-[65px] h-[16px] shrink-0 bg-white flex items-center justify-between pl-[1px]"><span>垫层</span><span class="w-[12px] h-[16px] bg-[#c1d2fb] rounded-[2px] flex items-center justify-center text-[#3a5a90]"><svg class="w-[8px] h-[7px]"><use href="#chev"/></svg></span></div>
      <div class="ml-[7px] w-[65px] h-[16px] shrink-0 bg-white flex items-center justify-between pl-[1px]"><span>DC-1</span><span class="w-[12px] h-[16px] bg-[#c1d2fb] rounded-[2px] flex items-center justify-center text-[#3a5a90]"><svg class="w-[8px] h-[7px]"><use href="#chev"/></svg></span></div>
      <div class="ml-[7px] w-[73px] h-[16px] shrink-0 bg-white flex items-center justify-between pl-[1px]"><span>分层1</span><span class="w-[12px] h-[16px] bg-[#c1d2fb] rounded-[2px] flex items-center justify-center text-[#3a5a90]"><svg class="w-[8px] h-[7px]"><use href="#chev"/></svg></span></div>
      <i class="ml-[3px] w-[4px] h-[20px] border-l border-[#c9c6b6] shrink-0"></i>
      <div class="w-[49px] h-[22px] shrink-0 flex items-center gap-[3px] pl-[3px] bg-[#f7f6ef] border border-[#7f9db9] rounded-[3px]"><svg class="w-[17px] h-[15px]"><use href="#attr"/></svg><span>属性</span></div>
      <div class="ml-[2px] w-[73px] h-[22px] shrink-0 flex items-center gap-[3px] pl-[3px] bg-white border border-[#7f9db9] rounded-[3px]"><svg class="w-[16px] h-[16px]"><use href="#list"/></svg><span>构件列表</span></div>
      <div class="ml-[6px] w-[72px] shrink-0 flex items-center gap-[3px]"><svg class="w-[15px] h-[16px]"><use href="#pick"/></svg><span>拾取构件</span></div>
      <i class="w-[11px] h-[20px] border-l-2 border-dotted border-[#aaa89a] shrink-0"></i>
      <div class="w-[51px] shrink-0 flex items-center gap-[5px]"><svg class="w-[15px] h-[15px]"><use href="#two"/></svg><span>两点</span></div>
      <div class="w-[51px] shrink-0 flex items-center gap-[4px]"><svg class="w-[15px] h-[15px]"><use href="#para"/></svg><span>平行</span></div>
      <div class="w-[75px] shrink-0 flex items-center gap-[4px]"><svg class="w-[15px] h-[15px]"><use href="#leng"/></svg><span>长度标注</span></div>
      <div class="w-[75px] shrink-0 flex items-center gap-[4px]"><svg class="w-[15px] h-[15px]"><use href="#alig"/></svg><span>对齐标注</span></div>
      <div class="shrink-0 flex items-center gap-[5px]"><svg class="w-[15px] h-[15px]"><use href="#meas"/></svg><span>测量</span></div>
    </div>
    <!-- row 3 -->
    <div class="h-[28px] pt-[2px] flex items-center overflow-hidden">
      <i class="ml-[3px] w-[12px] h-[20px] border-l-2 border-dotted border-[#aaa89a] shrink-0"></i>
      <div class="w-[59px] shrink-0 flex items-center"><svg class="w-[10px] h-[14px]"><use href="#cursor"/></svg><span class="ml-[6px]">选择</span><b class="ml-[8px] block w-0 h-0 border-x-[3px] border-t-[3px] border-x-transparent border-t-black"></b></div>
      <i class="w-[9px] h-[20px] border-l border-[#c9c6b6] shrink-0"></i>
      <div class="w-[50px] shrink-0 flex items-center gap-[5px]"><svg class="w-[13px] h-[13px]"><use href="#line"/></svg><span>直线</span></div>
      <div class="w-[86px] shrink-0 flex items-center"><svg class="w-[13px] h-[13px]"><use href="#arc"/></svg><span class="ml-[6px]">三点画弧</span><b class="ml-[7px] block w-0 h-0 border-x-[3px] border-t-[3px] border-x-transparent border-t-black"></b></div>
      <div class="w-[53px] h-[16px] shrink-0 bg-white flex items-center justify-end"><span class="w-[12px] h-[16px] bg-[#c1d2fb] rounded-[2px] flex items-center justify-center text-[#3a5a90]"><svg class="w-[8px] h-[7px]"><use href="#chev"/></svg></span></div>
      <div class="ml-[7px] w-[49px] shrink-0 flex items-center gap-[4px]"><svg class="w-[15px] h-[15px]"><use href="#rect"/></svg><span>矩形</span></div>
      <i class="w-[7px] h-[20px] border-l border-[#c9c6b6] shrink-0"></i>
      <div class="w-[82px] shrink-0 flex items-center"><svg class="w-[16px] h-[16px]"><use href="#smart"/></svg><span class="ml-[3px]">智能布置</span><b class="ml-[3px] block w-0 h-0 border-x-[3px] border-t-[3px] border-x-transparent border-t-black"></b></div>
      <i class="w-[8px] h-[20px] border-l border-[#c9c6b6] shrink-0"></i>
      <div class="w-[122px] shrink-0 flex items-center"><svg class="w-[14px] h-[16px]"><use href="#tri"/></svg><span class="ml-[5px]">三点定义斜垫层</span><b class="ml-[6px] block w-0 h-0 border-x-[3px] border-t-[3px] border-x-transparent border-t-black"></b></div>
      <div class="w-[111px] shrink-0 flex items-center gap-[4px]"><svg class="w-[17px] h-[16px]"><use href="#vtop"/></svg><span>查看垫层顶标高</span></div>
      <i class="w-[4px] h-[20px] border-l border-[#c9c6b6] shrink-0"></i>
      <div class="w-[98px] h-[23px] shrink-0 flex items-center gap-[4px] pl-[5px] bg-[#f7f6ef] border border-[#7f9db9] rounded-[3px]"><svg class="w-[16px] h-[16px]"><use href="#auto"/></svg><span>自动生成土方</span></div>
      <i class="ml-[46px] w-[11px] h-[20px] border-l-2 border-dotted border-[#aaa89a] shrink-0"></i>
      <div class="shrink-0 flex items-center gap-[3px] text-[#a9a89e]"><svg class="w-[17px] h-[16px]"><use href="#model"/></svg><span>从模型</span></div>
    </div>

    <div class="flex-1 flex min-h-0">
      <!-- side toolbar -->
      <div class="w-[27px] shrink-0 flex flex-col items-center leading-[13px] text-[12px]">
        <i class="h-[8px] w-[20px] border-t-2 border-dotted border-[#aaa89a] mt-[2px] mb-[-2px]"></i>
        <svg class="mt-[3px] w-[16px] h-[16px]"><use href="#brush"/></svg>
        <i class="mt-[4px] h-px w-[22px] bg-[#c9c6b6]"></i>
        <svg class="mt-[6px] w-[16px] h-[16px]"><use href="#circ"/></svg>
        <svg class="mt-[7px] w-[16px] h-[16px]"><use href="#mirror"/></svg>
        <i class="mt-[8px] h-px w-[22px] bg-[#c9c6b6]"></i>
        <svg class="mt-px w-[16px] h-[16px]"><use href="#move"/></svg>
        <svg class="mt-[6px] w-[16px] h-[16px]"><use href="#rotb"/></svg>
        <i class="mt-[6px] h-px w-[22px] bg-[#c9c6b6]"></i>
        <div class="mt-[8px] h-[48px] flex flex-col items-center"><svg class="w-[16px] h-[16px]"><use href="#ext"/></svg><span class="mt-px">延<br>伸</span></div>
        <div class="h-[50px] flex flex-col items-center"><svg class="w-[16px] h-[16px]"><use href="#trim"/></svg><span class="mt-[4px]">修<br>剪</span></div>
        <i class="h-px w-[22px] bg-[#c9c6b6]"></i>
        <div class="mt-[6px] h-[58px] flex flex-col items-center"><svg class="w-[16px] h-[16px]"><use href="#brk"/></svg><span class="mt-[2px]">打<br>断</span><b class="mt-[2px] block w-0 h-0 border-y-[3px] border-r-[3px] border-y-transparent border-r-black"></b></div>
        <div class="h-[52px] flex flex-col items-center"><svg class="w-[16px] h-[16px]"><use href="#brk"/></svg><span class="mt-[2px]">合<br>并</span></div>
        <div class="h-[48px] flex flex-col items-center"><svg class="w-[16px] h-[16px]"><use href="#seg"/></svg><span class="mt-px">分<br>割</span></div>
        <i class="h-px w-[22px] bg-[#c9c6b6]"></i>
        <div class="mt-[5px] h-[59px] flex flex-col items-center"><svg class="w-[16px] h-[16px]"><use href="#alg"/></svg><span class="mt-[4px]">对<br>齐</span><b class="mt-px block w-0 h-0 border-y-[3px] border-r-[3px] border-y-transparent border-r-black"></b></div>
        <div class="h-[50px] flex flex-col items-center"><svg class="w-[16px] h-[16px]"><use href="#off"/></svg><span class="mt-px">偏<br>移</span></div>
        <div class="h-[49px] flex flex-col items-center"><svg class="w-[16px] h-[16px]"><use href="#str"/></svg><span class="mt-px">拉<br>伸</span></div>
        <i class="h-px w-[22px] bg-[#c9c6b6]"></i>
        <div class="mt-[5px] flex flex-col items-center leading-[12px]"><svg class="w-[16px] h-[16px]"><use href="#setp"/></svg><span class="mt-[3px]">设<br>置<br>夹<br>点</span></div>
      </div>
      <!-- canvas -->
      <svg class="flex-1 min-w-0 h-full bg-black" viewBox="473 82 844 653" preserveAspectRatio="xMinYMin slice" font-family="Liberation Sans, sans-serif">
        <text x="1144" y="465" fill="#fff" font-size="13">3000</text>
        <polygon points="1143,205 1151,208 1156,215 1156,222 1151,229 1143,232 1135,229 1130,222 1130,215 1135,208" fill="#000" stroke="#008a00"/>
        <text x="1143" y="223" fill="#fff" font-size="13" text-anchor="middle">8</text>
        <polygon points="937,218 1243,233 1317,253 1317,435 937,418" fill="#007f00"/>
        <polygon points="1243,233 1317,253 1317,280 1287,269" fill="#007400"/>
        <polygon points="937,258 1000,259 980,264 937,263" fill="#005f00"/>
        <polyline points="980,264 1013,257 1287,269 1317,280" fill="none" stroke="#009a00" stroke-width="1.500"/>
        <polygon points="1013,257 1065,304 1003,318 937,313 937,263" fill="#006f00"/>
        <polygon points="1003,318 1065,304 1317,315 1317,333 1263,332 1223,319 1183,318 1140,326 1090,323" fill="#005a00"/>
        <polyline points="1140,326 1183,318 1223,319 1263,332 1317,352" fill="none" stroke="#009a00"/>
        <polygon points="937,320 1023,351 1050,377 937,372" fill="#008400"/>
        <polygon points="1017,350 1093,353 1118,380 1050,375" fill="#005a00"/>
        <polygon points="1047,372 1090,374 1093,378 1052,377" fill="#006040"/>
        <polygon points="937,367 983,368 1003,375 937,372" fill="#005a00"/>
        <polygon points="1183,318 1223,319 1285,376 1250,376 1203,384 1118,380" fill="#007200"/>
        <polygon points="1223,319 1317,352 1317,387 1290,378" fill="#007c00"/>
        <polygon points="1203,384 1250,376 1290,378 1317,387 1317,390 1247,387" fill="#005a00"/>
        <polygon points="937,372 1050,377 1118,380 1203,384 1247,387 1317,390 1317,407 937,390" fill="#007f00"/>
        <polygon points="937,390 1317,407 1317,435 937,418" fill="#007200"/>
        <polygon points="937,418 1317,435 1317,455 937,438" fill="#005a00"/>
        <polygon points="937,438 1317,455 1317,465 937,448" fill="#006035" stroke="#008020"/>
        <polyline points="937,464 1317,482" fill="none" stroke="#007a00"/>
        <polyline points="993,441 1043,484" fill="none" stroke="#007a00"/>
        <polyline points="1293,466 1317,478" fill="none" stroke="#007a00"/>
        <polygon points="1053,482 1061,485 1066,492 1066,499 1061,506 1053,509 1045,506 1040,499 1040,492 1045,485" fill="#000" stroke="#008a00"/>
        <text x="1053" y="500" fill="#fff" font-size="13" text-anchor="middle">4</text>
        <polygon points="590,179 598,182 603,189 603,196 598,203 590,206 582,203 577,196 577,189 582,182" fill="#000" stroke="#008a00"/>
        <text x="590" y="196" fill="#fff" font-size="13" text-anchor="middle">3</text>
        <polygon points="740,180 748,183 753,190 753,197 748,204 740,207 732,204 727,197 727,190 732,183" fill="#000" stroke="#008a00"/>
        <text x="517" y="668" fill="#1e82f0" font-size="12">Z</text>
        <text x="533" y="713" fill="#40e040" font-size="10">Y</text>
        <ellipse cx="523" cy="708" rx="5" ry="4" fill="#00ff00"/>
        <path d="M528 712V678h4v34z" fill="#0a7cf0"/>
        <path d="M531 664l5 13h-10z" fill="#0a7cf0"/>
        <path d="M529 711l32 1v5l-32-1z" fill="#ff0000"/>
        <path d="M577 715l-16-6 1 12z" fill="#ff0000"/>
        <rect x="1270" y="703" width="50" height="24" rx="3" fill="#eaf1fa" stroke="#9dbde6" stroke-width="2"/>
        <rect x="1279" y="708" width="15" height="15" fill="#cfdcec" stroke="#35577f"/>
        <text x="1286.500" y="720" fill="#2b5a92" font-size="12" font-weight="700" text-anchor="middle">Q</text>
        <text x="1301" y="720" fill="#3b73b0" font-size="14" font-family="Noto Sans CJK SC, sans-serif">中</text>
      </svg>
    </div>
  </div>
</div>

<!-- dialog -->
<div class="absolute left-[472px] top-[194px] z-10 w-[463px] h-[376px] flex flex-col bg-[#0a4fd8] rounded-t-[5px] border-[3px] border-t-0 border-[#0a52de]">
  <div class="h-[26px] flex items-center justify-between pl-[3px] pr-[1px] bg-gradient-to-b from-[#0a5fe8] via-[#0058e6] to-[#0a50d0] text-white font-bold text-[14px] shrink-0 rounded-t-[5px]">
    <span>生成方式及相关属性</span>
    <span class="w-[20px] h-[20px] bg-[#e04a24] border border-white rounded-[3px] flex items-center justify-center"><svg class="w-[12px] h-[12px]" viewBox="0 0 10 10"><path d="M1 1l8 8M9 1l-8 8" stroke="#fff" stroke-width="2"/></svg></span>
  </div>
  <div class="flex-1 bg-[#ece9d8] pt-[17px] pl-[7px] flex flex-col min-h-0 text-[12px] leading-[12px]">
    <div class="flex">
      <div class="w-[177px]">
        <div class="relative h-[50px] border border-[#d0cebf] rounded-[5px]">
          <span class="absolute -top-[7px] left-[5px] px-[2px] bg-[#ece9d8] text-[#0046d5]">生成方式</span>
          <div class="flex items-center pt-[19px] pl-[7px]">
            <i class="w-[13px] h-[13px] rounded-full border border-[#1c5180] bg-white flex items-center justify-center"><b class="block w-[5px] h-[5px] rounded-full bg-[#3aa84a]"></b></i>
            <span class="ml-[3px]">自动方式</span>
            <i class="ml-[19px] w-[13px] h-[13px] rounded-full border border-[#1c5180] bg-white"></i>
            <span class="ml-[3px]">手动方式</span>
          </div>
        </div>
        <div class="relative mt-[12px] h-[51px] border border-[#d0cebf] rounded-[5px]">
          <span class="absolute -top-[7px] left-[5px] px-[2px] bg-[#ece9d8] text-[#0046d5]">生成范围</span>
          <div class="flex items-center pt-[19px] pl-[7px]">
            <i class="w-[13px] h-[13px] border border-[#1c5180] bg-white flex items-center justify-center"><svg class="w-[10px] h-[10px]" viewBox="0 0 10 10"><path d="M1.500 5l2.500 3 4.500-6" fill="none" stroke="#21a121" stroke-width="2"/></svg></i>
            <span class="ml-[3px]">基坑土方</span>
            <i class="ml-[21px] w-[13px] h-[13px] border border-[#1c5180] bg-gradient-to-br from-[#e6e5dc] to-white"></i>
            <span class="ml-[3px]">灰土回填</span>
          </div>
        </div>
        <div class="relative mt-[13px] h-[99px] border border-[#d0cebf] rounded-[5px]">
          <span class="absolute -top-[7px] left-[5px] px-[2px] bg-[#ece9d8] text-[#0046d5]">土方相关属性</span>
          <div class="flex items-center pt-[15px] pl-[6px]">
            <span class="w-[78px] pt-[3px]">工作面宽</span>
            <div class="w-[89px] h-[20px] border border-[#7f9db9] bg-white flex items-center justify-between pl-[2px]"><span>300</span><span class="w-[16px] h-[18px] mr-px bg-[#c1d2fb] rounded-[2px] flex items-center justify-center text-[#26477a]"><svg class="w-[10px] h-[8px]"><use href="#chev"/></svg></span></div>
          </div>
          <div class="flex items-center pt-[17px] pl-[6px]">
            <span class="w-[78px] -mt-[5px]">放坡系数</span>
            <div class="w-[89px] h-[20px] border border-[#7f9db9] bg-white flex items-center justify-between pl-[2px]"><span class="bg-[#316ac5] text-white border-r border-[#d08030] pr-px">0.33</span><span class="w-[16px] h-[18px] mr-px bg-[#c1d2fb] rounded-[2px] flex items-center justify-center text-[#26477a]"><svg class="w-[10px] h-[8px]"><use href="#chev"/></svg></span></div>
          </div>
        </div>
      </div>
      <div class="ml-[23px] relative w-[241px] h-[225px] border border-[#d0cebf] rounded-[5px]">
        <span class="absolute -top-[7px] left-[5px] px-[1px] bg-[#ece9d8] text-[#0046d5]">灰土回填属性</span>
        <div class="ml-[2px] mt-[22px] w-[230px] h-[98px] bg-white border border-[#7f9db9] pt-px pl-px">
          <table class="table-fixed w-[207px] text-[#808080]">
            <colgroup><col class="w-[69px]"><col class="w-[69px]"><col class="w-[69px]"></colgroup>
            <tr class="h-[18px]"><td></td><td class="bg-gradient-to-b from-[#fde4ab] to-[#f5bb5e] text-[#62048c] text-center border-l border-[#c0c0c0]">材质</td><td class="bg-gradient-to-b from-[#f8f7f0] to-[#e8e5d6] text-center border-l border-r border-[#c0c0c0]">厚度(mm)</td></tr>
            <tr class="h-[19px]"><td class="bg-[#fdd08a] text-[#62048c] text-center border-b border-[#c0c0c0]">底层</td><td class="pl-[2px] bg-[#dfe9f5] border-l border-t border-b border-[#c0c0c0]">3:7灰土</td><td class="pl-[2px] border border-[#c0c0c0]">1000</td></tr>
            <tr class="h-[19px]"><td class="bg-gradient-to-b from-[#f8f7f0] to-[#e8e5d6] text-center border-b border-[#c0c0c0]">中层</td><td class="pl-[2px] border-l border-b border-[#c0c0c0]">3:7灰土</td><td class="pl-[2px] border-l border-r border-b border-[#c0c0c0]">500</td></tr>
            <tr class="h-[19px]"><td class="bg-gradient-to-b from-[#f8f7f0] to-[#e8e5d6] text-center border-b border-[#c0c0c0]">顶层</td><td class="pl-[2px] border-l border-b border-[#c0c0c0]">3:7灰土</td><td class="pl-[2px] border-l border-r border-b border-[#c0c0c0]">500</td></tr>
          </table>
        </div>
        <div class="flex items-center pt-[21px] pl-[6px] text-[#808080]">
          <span class="w-[60px] pt-[3px]">工作面宽</span>
          <div class="w-[166px] h-[20px] border border-[#c9c7ba] bg-white flex items-center justify-between pl-[2px] text-[#a0a0a0]"><span>300</span><span class="w-[16px] h-[18px] mr-px bg-[#e4e2d6] rounded-[2px] flex items-center justify-center text-[#b0aea2]"><svg class="w-[10px] h-[8px]"><use href="#chev"/></svg></span></div>
        </div>
        <div class="flex items-center pt-[17px] pl-[6px] text-[#808080]">
          <span class="w-[60px] -mt-[5px]">放坡系数</span>
          <div class="w-[167px] h-[20px] border border-[#c9c7ba] bg-white flex items-center justify-between pl-[2px] text-[#a0a0a0]"><span>0</span><span class="w-[16px] h-[18px] mr-px bg-[#e4e2d6] rounded-[2px] flex items-center justify-center text-[#b0aea2]"><svg class="w-[10px] h-[8px]"><use href="#chev"/></svg></span></div>
        </div>
      </div>
    </div>
    <p class="mt-[7px]">自动生成：根据输入的相关属性，及已经绘制的所有的独立基础、桩承台、垫层、<br>集水坑，生成土方构件<br><br>手动生成：根据输入的相关属性，选择已经绘制好的独立基础、桩承台、垫层、集<br>水坑，生成土方构件</p>
    <div class="mt-[11px] pr-[10px] flex justify-end gap-[8px]">
      <button class="w-[73px] h-[23px] border border-[#003c74] rounded-[3px] bg-gradient-to-b from-white to-[#ecebe0]">确定</button>
      <button class="w-[73px] h-[23px] border border-[#003c74] rounded-[3px] bg-gradient-to-b from-white to-[#ecebe0]">取消</button>
    </div>
  </div>
</div>

<!-- annotation arrows -->
<svg class="absolute left-0 top-0 z-20 w-[1317px] h-[735px] pointer-events-none" viewBox="0 0 1317 735">
  <polygon points="260,136.500 1122,65 1122,71 260,137.500" fill="#ff3838"/>
  <polygon points="1145,68 1119,60 1122,76" fill="#ff3030"/>
  <line x1="1120" y1="80" x2="750" y2="190" stroke="#8a2424" stroke-width="1"/>
  <polygon points="748,189 560,241 563,247 751,193" fill="#f04040"/>
  <polygon points="546,250 566,236 570,251" fill="#ff3030"/>
  <polygon points="75,497 248,149 253,152 76,498" fill="#ff3b3b"/>
  <polygon points="256,140 245,149 255,155" fill="#ff3030"/>
</svg>
</body>
</html>
